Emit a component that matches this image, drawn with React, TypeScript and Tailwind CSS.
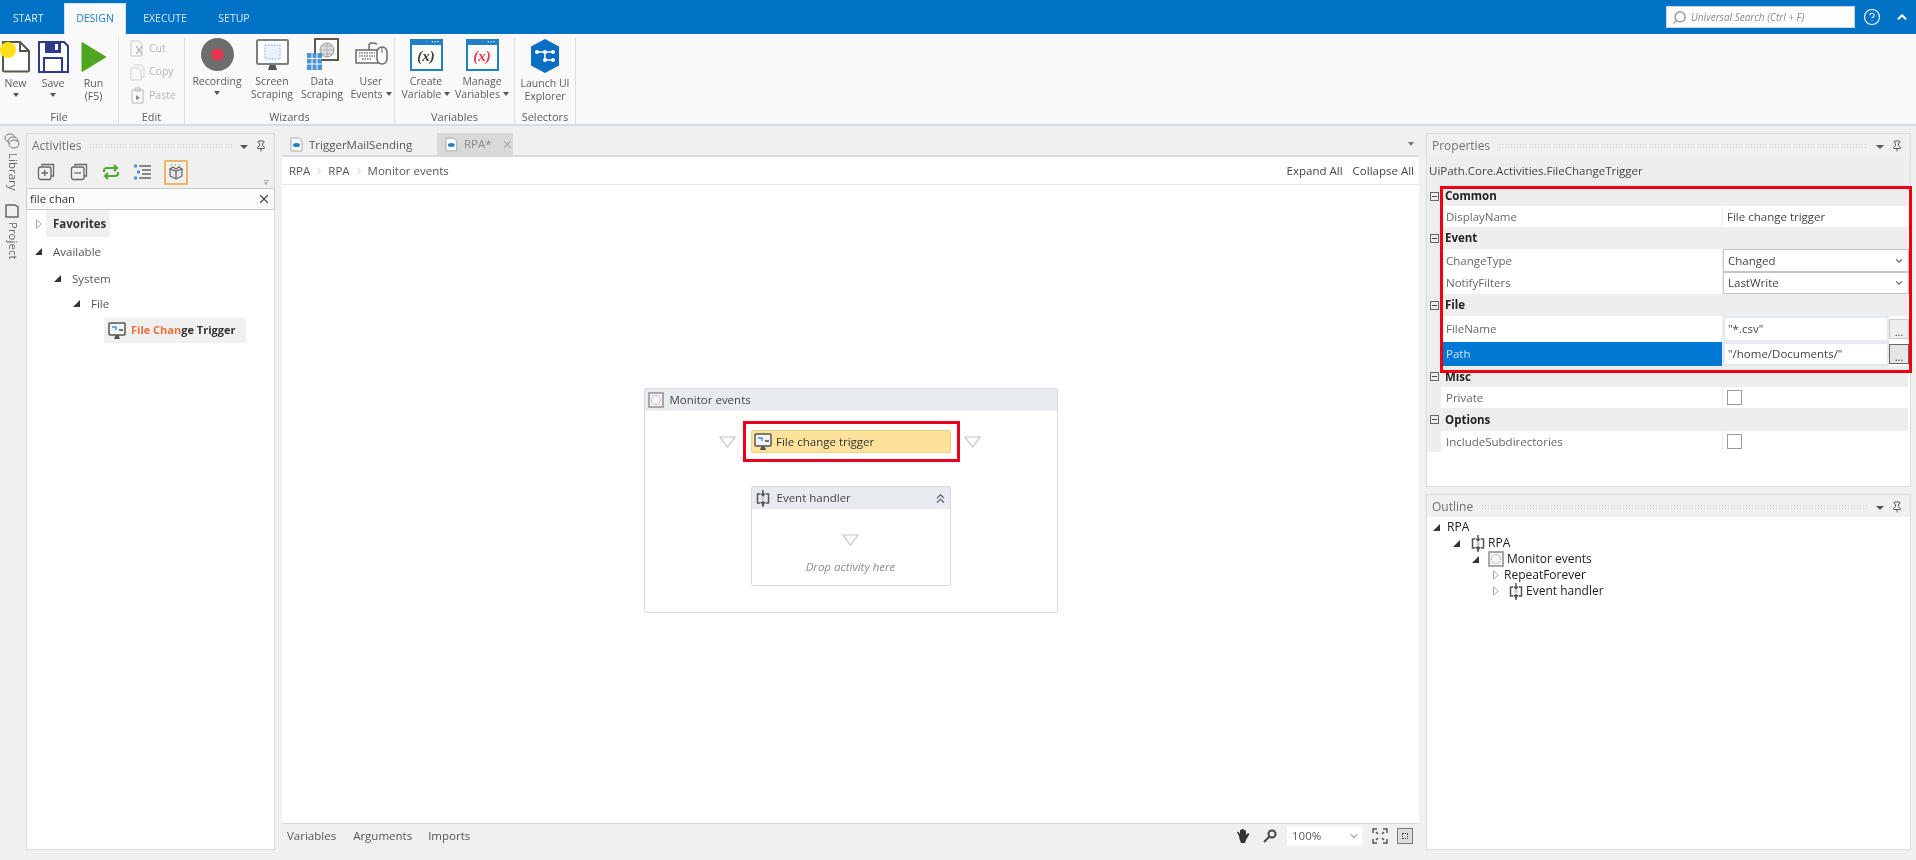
import { ChevronDown, ChevronUp, ChevronsUp, ChevronRight, CircleHelp, Pin, Search, X } from "lucide-react";
import type { ReactNode } from "react";

function Caret() {
  return <span className="inline-block w-0 h-0 border-x-[3.5px] border-x-transparent border-t-[4px] border-t-[#555]" />;
}

function Grip() {
  return <div className="flex-1 h-[6px] mx-2 bg-[radial-gradient(#c9c9c9_1px,transparent_1px)] bg-[length:3px_3px]" />;
}

function PanelTitle({ title }: { title: string }) {
  return (
    <div className="h-[22px] flex items-center pl-[5px] pr-[5px] pt-[1px] text-[12px] text-[#717171] bg-[#f0f0f0] shrink-0">
      {title}
      <Grip />
      <span className="mt-[2px] mr-[7px] w-0 h-0 border-x-[4px] border-x-transparent border-t-[4px] border-t-[#555]" />
      <Pin size={12} className="text-[#555] mr-[2px]" />
    </div>
  );
}

function RibbonButton({ width, icon, lines, caret }: { width: string; icon: ReactNode; lines: string[]; caret?: "below" | "inline" }) {
  return (
    <div className={`${width} shrink-0 flex flex-col items-center text-[10.5px] leading-[12px] text-[#5c5c5c]`}>
      <div className="h-[36px] flex items-end justify-center">{icon}</div>
      <div className="mt-[4px] text-center whitespace-nowrap">{lines[0]}</div>
      {lines[1] && (
        <div className="mt-[1px] text-center whitespace-nowrap flex items-center gap-[3px]">
          {lines[1]}
          {caret === "inline" && <Caret />}
        </div>
      )}
      {caret === "below" && (
        <div className="mt-[4px] leading-none flex">
          <Caret />
        </div>
      )}
    </div>
  );
}

function RibbonGroup({ width, label, children }: { width: string; label: string; children: ReactNode }) {
  return (
    <div className={`${width} shrink-0 h-[87px] mt-[3px] border-r border-[#dedede] flex flex-col`}>
      <div className="flex flex-1">{children}</div>
      <div className="text-center text-[11px] leading-[14px] text-[#5c5c5c]">{label}</div>
    </div>
  );
}

function NewIcon() {
  return (
    <svg width="32" height="33" viewBox="0 0 32 33" fill="none" stroke="#57564d" strokeWidth="2">
      <path d="M3 2h17l9 9v19a1.5 1.5 0 0 1-1.5 1.5H4.500A1.500 1.500 0 0 1 3 30z" fill="#fff" />
      <path d="M20 2v9h9" />
    </svg>
  );
}

function SaveIcon() {
  return (
    <svg width="32" height="32" viewBox="0 0 32 32" fill="none" stroke="#2e3a8c" strokeWidth="2">
      <path d="M2 1h25l4 4v26H2z" fill="#fff" />
      <path d="M9 1h14v10H9z" fill="#2e3a8c" />
      <path d="M18 3h3v6h-3z" fill="#fff" stroke="none" />
      <path d="M7 31V17h18v14" />
    </svg>
  );
}

function RunIcon() {
  return (
    <svg width="26" height="32" viewBox="0 0 26 32">
      <path d="M2 1.500 24 15a1 1 0 0 1 0 2L2 30.500a1 1 0 0 1-1.500-1V2.500A1 1 0 0 1 2 1.500z" fill="#4fa620" />
    </svg>
  );
}

function RecordIcon() {
  return (
    <svg width="33" height="33" viewBox="0 0 33 33">
      <circle cx="16.500" cy="16.500" r="16.500" fill="#6d6d6d" />
      <circle cx="16.500" cy="16.500" r="6" fill="#ee3350" />
    </svg>
  );
}

function ScreenIcon() {
  return (
    <svg width="33" height="32" viewBox="0 0 33 32">
      <rect x="1" y="1" width="31" height="24" rx="1.500" fill="#fff" stroke="#7e7e7e" strokeWidth="2" />
      <rect x="9" y="6" width="15" height="14" fill="#eaf3fb" stroke="#6aa9dc" strokeWidth="1" strokeDasharray="1.500 1.500" />
      <path d="M12 31l1.500-5h6l1.500 5z" fill="#555" />
    </svg>
  );
}

function DataIcon() {
  return (
    <svg width="33" height="33" viewBox="0 0 33 33">
      <rect x="9" y="1" width="23" height="21" fill="#fff" stroke="#5f5a48" strokeWidth="2" />
      <circle cx="21" cy="12" r="7" fill="#ddd" stroke="#999" />
      <path d="M14 12h14M21 5v14M16 8h10M16 16h10" stroke="#aaa" strokeWidth=".8" />
      <rect x="1" y="15" width="15" height="17" fill="#4d92d6" />
      <path d="M1 20.500h15M1 26h15M6 15v17M11 15v17" stroke="#fff" strokeWidth="1" />
    </svg>
  );
}

function EventsIcon() {
  return (
    <svg width="33" height="26" viewBox="0 0 33 26" fill="none" className="mb-[4px]">
      <path d="M1 9h22v13H1z" fill="#fff" stroke="#6a6a6a" strokeWidth="1.500" />
      <path d="M4 12h16M4 15h16M7 18h10" stroke="#777" strokeWidth="1.500" strokeDasharray="1.500 1" />
      <path d="M14 9V4c0-2 4-3 8-1" stroke="#6a6a6a" strokeWidth="1.500" />
      <rect x="22" y="6" width="10" height="17" rx="5" fill="#fff" stroke="#6a6a6a" strokeWidth="1.500" />
      <path d="M27 6v6" stroke="#6a6a6a" />
    </svg>
  );
}

function VarIcon({ color }: { color: string }) {
  return (
    <div className="relative w-[33px] h-[32px] bg-[#fbfbf8] border-2 border-[#1f7fc8] border-t-[6px]">
      <span className="absolute right-[1px] -top-[5px] text-white text-[6px] leading-[5px] tracking-[0.5px]">•••</span>
      <div className={`${color} text-center font-bold italic text-[15px] leading-[23px] font-['Liberation_Serif',serif]`}>(x)</div>
    </div>
  );
}

function ExplorerIcon() {
  return (
    <svg width="30" height="34" viewBox="0 0 30 34">
      <path d="M15 0l14 7.500v19L15 34 1 26.500v-19z" fill="#0a6fc2" strokeLinejoin="round" />
      <path d="M7 13h16M15 13v8M15 21h8" stroke="#fff" strokeWidth="1.500" />
      <circle cx="7" cy="13" r="2" fill="#fff" />
      <circle cx="23" cy="13" r="2" fill="#fff" />
      <circle cx="15" cy="13" r="2" fill="#fff" />
      <circle cx="15" cy="21" r="2" fill="#fff" />
      <circle cx="23" cy="21" r="2" fill="#fff" />
    </svg>
  );
}

function EditRow({ label, icon }: { label: string; icon: ReactNode }) {
  return (
    <div className="h-[23.500px] flex items-center pl-[11px] gap-[4px] text-[10.5px] text-[#b5b5b5]">
      <span className="w-[15px] h-[18px] flex items-center justify-center">{icon}</span>
      {label}
    </div>
  );
}

function Ribbon() {
  return (
    <div className="h-[92px] shrink-0 bg-[#f9f9f9] border-b-2 border-[#d6dce2] flex">
      <RibbonGroup width="w-[119px]" label="File">
        <RibbonButton width="w-[31px]" icon={<NewIcon />} lines={["New"]} caret="below" />
        <RibbonButton width="w-[44px]" icon={<SaveIcon />} lines={["Save"]} caret="below" />
        <RibbonButton width="w-[37px]" icon={<RunIcon />} lines={["Run", "(F5)"]} />
      </RibbonGroup>
      <RibbonGroup width="w-[66px]" label="Edit">
        <div>
          <EditRow label="Cut" icon={<svg width="15" height="17" viewBox="0 0 15 17" fill="none" stroke="#c9c9c9"><path d="M1 1h8l3 3v12H1z" /><path d="M6 6l6 8M12 6l-6 8" stroke="#999" /></svg>} />
          <EditRow label="Copy" icon={<svg width="15" height="17" viewBox="0 0 15 17" fill="none" stroke="#d0d0d0"><path d="M4 1h7l3 3v9h-3M1 4h7l3 3v9H1z" /></svg>} />
          <EditRow label="Paste" icon={<svg width="15" height="17" viewBox="0 0 15 17" fill="none" stroke="#bbb"><path d="M2 3h11v13H2zM5 1h5v3H5z" /><path d="M6 8l4 3-4 2z" fill="#888" stroke="none" /></svg>} />
        </div>
      </RibbonGroup>
      <RibbonGroup width="w-[210px]" label="Wizards">
        <div className="flex -mt-[2px]">
          <RibbonButton width="w-[64px]" icon={<RecordIcon />} lines={["Recording"]} caret="below" />
          <RibbonButton width="w-[46px]" icon={<ScreenIcon />} lines={["Screen", "Scraping"]} />
          <RibbonButton width="w-[54px]" icon={<DataIcon />} lines={["Data", "Scraping"]} />
          <RibbonButton width="w-[44px]" icon={<EventsIcon />} lines={["User", "Events"]} caret="inline" />
        </div>
      </RibbonGroup>
      <RibbonGroup width="w-[120px]" label="Variables">
        <div className="flex -mt-[2px] pl-[2px]">
          <RibbonButton width="w-[58px]" icon={<VarIcon color="text-[#3f3f36]" />} lines={["Create", "Variable"]} caret="inline" />
          <RibbonButton width="w-[54px]" icon={<VarIcon color="text-[#ee3350]" />} lines={["Manage", "Variables"]} caret="inline" />
        </div>
      </RibbonGroup>
      <RibbonGroup width="w-[61px]" label="Selectors">
        <RibbonButton width="w-[60px]" icon={<ExplorerIcon />} lines={["Launch UI", "Explorer"]} />
      </RibbonGroup>
    </div>
  );
}

function TopBar() {
  return (
    <div className="h-[34px] shrink-0 bg-[#0072c6] flex items-end text-[10.5px] text-[#d9ecf9]">
      <div className="w-[64px] h-[31px] flex items-center pl-[13px]">START</div>
      <div className="w-[62px] h-[31px] flex items-center justify-center bg-[#f9f9f9] text-[#1a7cc8] border-t border-x border-[#cfe3f2]">DESIGN</div>
      <div className="w-[78px] h-[31px] flex items-center justify-center">EXECUTE</div>
      <div className="w-[60px] h-[31px] flex items-center justify-center">SETUP</div>
      <div className="ml-auto self-center flex items-center mr-[7px]">
        <div className="w-[189px] h-[22px] bg-white border border-[#cfd6dc] flex items-center pl-[5px] gap-[4px] text-[10px] italic text-[#8a8a8a]">
          <Search size={15} className="text-[#8a8a8a] -scale-x-100" />
          Universal Search (Ctrl + F)
        </div>
        <CircleHelp size={18} strokeWidth={1.500} className="ml-[8px] text-white" />
        <ChevronUp size={14} strokeWidth={3.500} className="ml-[14px] text-white" />
      </div>
    </div>
  );
}

function SideRail() {
  return (
    <div className="w-[26px] shrink-0 flex flex-col items-center text-[11.500px] text-[#666]">
      <svg width="16" height="16" viewBox="0 0 16 16" fill="none" stroke="#777" className="ml-[-2px]">
        <ellipse cx="6" cy="5" rx="5" ry="4" fill="#f0f0f0" />
        <ellipse cx="9" cy="8" rx="5" ry="4" fill="#f0f0f0" />
        <ellipse cx="10" cy="11" rx="5" ry="4" fill="#f0f0f0" />
      </svg>
      <div className="[writing-mode:vertical-rl] mt-[4px] h-[37px] leading-[16px]">Library</div>
      <svg width="14" height="15" viewBox="0 0 14 15" fill="none" stroke="#666" strokeWidth="1.500" className="mt-[13px] ml-[-2px]">
        <path d="M1 2h9l3 2v10H1z" />
      </svg>
      <div className="[writing-mode:vertical-rl] mt-[4px] leading-[16px]">Project</div>
    </div>
  );
}

function TreeArrow({ open }: { open?: boolean }) {
  return open ? (
    <span className="w-0 h-0 border-l-[7px] border-l-transparent border-b-[7px] border-b-[#333]" />
  ) : (
    <svg width="6" height="10" viewBox="0 0 6 10" fill="#fff" stroke="#aaa">
      <path d="M.5.8 5.300 5 .5 9.200z" />
    </svg>
  );
}

function MonitorIcon({ size = 18 }: { size?: number }) {
  return (
    <svg width={size} height={size} viewBox="0 0 18 18" fill="none">
      <rect x="1" y="1" width="16" height="12" rx="1" fill="#f3f3f3" stroke="#555" strokeWidth="1.500" />
      <path d="M4 5h4v3" stroke="#4d92d6" strokeWidth="1.500" />
      <path d="M11 8h4" stroke="#444" strokeWidth="1.500" />
      <path d="M6 17l1.500-4h3L12 17z" fill="#555" />
    </svg>
  );
}

function SeqIcon() {
  return (
    <svg width="14" height="17" viewBox="0 0 14 17" fill="none" stroke="#555" strokeWidth="1.500">
      <path d="M4 4H1.500v9H4M10 4h2.500v9H10" />
      <path d="M7 0v5M7 11v6" />
      <path d="M4 3.500h6L7 7zM4 12h6l-3 4z" fill="#555" stroke="none" />
      <rect x="5.500" y="6.500" width="3" height="4" fill="#ccc" stroke="none" />
    </svg>
  );
}

function ClockIcon({ size }: { size: string }) {
  return (
    <div className={`${size} border-2 border-[#a8a8a8] bg-[#f4f4f4] flex items-center justify-center shrink-0`}>
      <div className="w-[10px] h-[10px] rounded-full border border-dotted border-[#999]" />
    </div>
  );
}

function ActivitiesPanel() {
  return (
    <div className="w-[249px] shrink-0 flex flex-col border border-[#dcdcdc] bg-white">
      <PanelTitle title="Activities" />
      <div className="h-[32px] shrink-0 bg-[#f0f0f0] flex items-center pl-[10px] relative">
        <svg width="18" height="18" viewBox="0 0 18 18" fill="none" stroke="#666" strokeWidth="1.300" className="mr-[15px]">
          <path d="M5 3V1.500h11.500V13H14" />
          <rect x="1.500" y="4" width="12.500" height="12.500" rx="2" />
          <path d="M4.500 10h6.500M7.750 7v6" />
        </svg>
        <svg width="18" height="18" viewBox="0 0 18 18" fill="none" stroke="#666" strokeWidth="1.300" className="mr-[14px]">
          <path d="M5 3V1.500h11.500V13H14" />
          <rect x="1.500" y="4" width="12.500" height="12.500" rx="2" />
          <path d="M4.500 10h6.500" />
        </svg>
        <svg width="18" height="18" viewBox="0 0 18 18" fill="none" stroke="#55aa33" strokeWidth="2.200" className="mr-[14px]">
          <path d="M2 9V7.500A2.500 2.500 0 0 1 4.500 5H14M16 9v1.500a2.500 2.500 0 0 1-2.500 2.500H4" />
          <path d="M12 2l3 3-3 3M6 10l-3 3 3 3" />
        </svg>
        <svg width="18" height="18" viewBox="0 0 18 18" fill="none" className="mr-[12px]">
          <path d="M5 3h12M8 7h9M8 11h9M5 15h12" stroke="#666" strokeWidth="1.300" />
          <path d="M0 1.500h3v3H0zM3 7.500h3v3H3zM0 13.500h3v3H0z" fill="#4d92d6" />
        </svg>
        <div className="w-[24px] h-[25px] border-2 border-[#efb566] flex items-center justify-center">
          <svg width="16" height="16" viewBox="0 0 16 16" fill="none" stroke="#666" strokeWidth="1.200">
            <path d="M2 5l6 2 6-2v7l-6 3-6-3zM8 7v8" fill="#e7e7e7" />
            <path d="M2 5l3-2 3 2 3-2 3 2" />
            <path d="M3 1h1M7 .8h1M11 1h1" stroke="#66bb44" strokeWidth="1.500" />
          </svg>
        </div>
        <div className="absolute right-[5px] bottom-[3px] flex flex-col gap-[1px]">
          <div className="w-[5px] h-[1px] bg-[#aaa]" />
          <span className="w-0 h-0 border-x-[2.500px] border-x-transparent border-t-[3px] border-t-[#aaa]" />
        </div>
      </div>
      <div className="h-[22px] shrink-0 flex items-center justify-between pl-[3px] pr-[3px] border border-[#c8c8c8] bg-[#fbfbfb] text-[11.500px] text-[#333] -mx-[1px]">
        file chan
        <X size={14} strokeWidth={2} className="text-[#444]" />
      </div>
      <div className="flex-1 text-[11.500px] text-[#555]">
        <div className="h-[27px] flex items-center pl-[9px]">
          <TreeArrow />
          <span className="ml-[4px] h-[27px] w-[64px] bg-[#f0f0f0] flex items-center pl-[7px] font-bold text-[#333]">Favorites</span>
        </div>
        <div className="h-[29px] flex items-center pl-[8px]">
          <TreeArrow open />
          <span className="ml-[11px]">Available</span>
        </div>
        <div className="h-[25px] flex items-center pl-[27px]">
          <TreeArrow open />
          <span className="ml-[11px]">System</span>
        </div>
        <div className="h-[25px] flex items-center pl-[46px]">
          <TreeArrow open />
          <span className="ml-[11px]">File</span>
        </div>
        <div className="mt-[2px] ml-[77px] w-[142px] h-[25px] bg-[#f0f0f0] flex items-center pl-[4px] gap-[5px] font-bold text-[11px] whitespace-nowrap text-[#333]">
          <MonitorIcon />
          <span>
            <span className="text-[#f0703a]">File Chan</span>ge Trigger
          </span>
        </div>
      </div>
    </div>
  );
}

function DropArrow({ className }: { className?: string }) {
  return (
    <svg width="17" height="12" viewBox="0 0 17 12" className={className} fill="#fff" stroke="#bcc5d3" strokeWidth="1.200">
      <path d="M1 1h15l-7.500 10z" />
    </svg>
  );
}

function Diagram() {
  return (
    <div className="flex-1 flex items-center justify-center pb-[7px]">
      <div className="w-[414px] h-[225px] border border-[#d3d9e2] rounded-[2px] bg-white flex flex-col items-center">
        <div className="w-full h-[22px] bg-[#e8ebef] flex items-center pl-[3px] gap-[6px] text-[11.500px] text-[#444]">
          <ClockIcon size="w-[16px] h-[16px]" />
          Monitor events
        </div>
        <div className="mt-[10px] flex items-center gap-[4px] -ml-[2px]">
          <DropArrow className="mr-[3px]" />
          <div className="w-[217px] h-[41px] border-[3px] border-[#e8001c] flex items-center justify-center">
            <div className="w-[200px] h-[23px] bg-[#fde29c] border border-[#f0cf80] rounded-[2px] flex items-center pl-[2px] gap-[4px] text-[11.500px] text-[#333]">
              <MonitorIcon />
              File change trigger
            </div>
          </div>
          <DropArrow />
        </div>
        <div className="mt-[24px] w-[200px] h-[100px] border border-[#d3d9e2] rounded-[2px] flex flex-col items-center">
          <div className="w-full h-[22px] bg-[#e8ebef] flex items-center pl-[4px] gap-[7px] text-[11.500px] text-[#444]">
            <SeqIcon />
            Event handler
            <ChevronsUp size={15} strokeWidth={2} className="ml-auto mr-[2px] text-[#5a6472]" />
          </div>
          <DropArrow className="mt-[25px]" />
          <div className="mt-[12px] text-[11.500px] italic text-[#8c8c8c]">Drop activity here</div>
        </div>
      </div>
    </div>
  );
}

function DocIcon() {
  return (
    <svg width="13" height="15" viewBox="0 0 13 15" fill="#fff" stroke="#aaa">
      <path d="M1 1h8l3 3v10H1z" />
      <ellipse cx="6.500" cy="8" rx="3.500" ry="2" fill="#1f7fc8" stroke="none" />
    </svg>
  );
}

function CenterPanel() {
  return (
    <div className="w-[1137px] shrink-0 flex flex-col mx-[7px]">
      <div className="h-[22px] shrink-0 flex items-center pl-[8px] text-[11.500px] text-[#555]">
        <DocIcon />
        <span className="ml-[6px] mt-[1px]">TriggerMailSending</span>
        <div className="ml-[25px] w-[76px] h-[22px] bg-[#d9d9d9] flex items-center pl-[8px] text-[#8a8a8a]">
          <DocIcon />
          <span className="ml-[6px]">RPA*</span>
          <X size={13} strokeWidth={1.800} className="ml-[9px]" />
        </div>
        <span className="ml-auto mr-[5px] w-0 h-0 border-x-[3.500px] border-x-transparent border-t-[4px] border-t-[#777]" />
      </div>
      <div className="flex-1 flex flex-col bg-white border-t-2 border-[#d9d9d9] min-h-0">
        <div className="h-[28px] shrink-0 border-b border-[#dfe6ef] flex items-center pl-[7px] pr-[5px] text-[11.500px] text-[#555]">
          RPA
          <ChevronRight size={12} className="mx-[3px] text-[#ccc]" />
          RPA
          <ChevronRight size={12} className="mx-[3px] text-[#ccc]" />
          Monitor events
          <span className="ml-auto text-[#444]">Expand All</span>
          <span className="ml-[10px] text-[#444]">Collapse All</span>
        </div>
        <Diagram />
      </div>
      <div className="h-[24px] shrink-0 bg-[#f0f0f0] border-t border-[#d9d9d9] flex items-center pl-[5px] pr-[6px] text-[11.500px] text-[#555] mb-[3px]">
        <span>Variables</span>
        <span className="ml-[17px]">Arguments</span>
        <span className="ml-[16px]">Imports</span>
        <svg width="15" height="16" viewBox="0 0 15 16" className="ml-auto" fill="#333">
          <path d="M3 8L1 4.500l1-1L4 6V2h1.500v3.500V1H7v4.500V1.500h1.500V6V2.500H10V7l2-2 1.500 1L10 12l-1 3H5L3.500 11z" />
        </svg>
        <svg width="14" height="14" viewBox="0 0 14 14" className="ml-[12px]" fill="none" stroke="#444" strokeWidth="2">
          <circle cx="9" cy="5" r="3.500" />
          <path d="M6 8l-5 5" />
        </svg>
        <div className="ml-[10px] w-[75px] h-[20px] bg-white flex items-center pl-[5px] text-[#555]">
          100%
          <ChevronDown size={12} className="ml-auto mr-[2px] text-[#666]" />
        </div>
        <svg width="16" height="16" viewBox="0 0 16 16" className="ml-[10px]" fill="none" stroke="#555" strokeWidth="1.500">
          <path d="M1 5V1h4M11 1h4v4M15 11v4h-4M5 15H1v-4M4 4l2 2M12 4l-2 2M4 12l2-2M12 12l-2-2" />
        </svg>
        <div className="ml-[9px] w-[16px] h-[16px] border border-[#777] bg-[#ddd] flex items-center justify-center">
          <div className="w-[6px] h-[6px] border border-dotted border-[#444]" />
        </div>
      </div>
    </div>
  );
}

function SectionRow({ title, height }: { title: string; height: string }) {
  return (
    <div className={`${height} flex items-center bg-[#eeeeee]`}>
      <div className="w-[14px] flex justify-center">
        <div className="w-[9px] h-[9px] border border-[#666] flex items-center justify-center">
          <div className="w-[5px] h-[1px] bg-[#444]" />
        </div>
      </div>
      <div className="pl-[4px] text-[11.500px] font-bold text-[#222]">{title}</div>
    </div>
  );
}

function PropRow({ label, height, selected, children }: { label: string; height: string; selected?: boolean; children: ReactNode }) {
  return (
    <div className={`${height} flex bg-[#eeeeee] text-[11.500px]`}>
      <div className="w-[14px] shrink-0" />
      <div className={`w-[281px] shrink-0 flex items-center pl-[5px] mr-[1px] ${selected ? "bg-[#0078d4] text-[#cfe6f8]" : "bg-white text-[#666]"}`}>{label}</div>
      <div className="flex-1 bg-white flex items-center text-[#444]">{children}</div>
    </div>
  );
}

function SelectBox({ value }: { value: string }) {
  return (
    <div className="w-[186px] h-full border border-[#c4c4c4] flex items-center pl-[4px] pr-[4px] justify-between">
      {value}
      <ChevronDown size={10} strokeWidth={3} className="text-[#777]" />
    </div>
  );
}

function PathBox({ value, active }: { value: string; active?: boolean }) {
  return (
    <div className="w-full h-full flex items-center">
      <div className="w-[166px] h-full border-2 border-[#e4e9ef] flex items-center pl-[3px]">{value}</div>
      <div className={`w-[20px] h-[20px] flex items-end justify-center text-[11px] leading-[12px] ${active ? "bg-[#e6e6e6] border border-[#666]" : "bg-[#eeeeee] border border-[#ccc]"}`}>...</div>
    </div>
  );
}

function CheckBox() {
  return <div className="ml-[4px] w-[15px] h-[15px] border border-[#9a9a9a] bg-white" />;
}

function PropertiesPanel() {
  return (
    <div className="h-[354px] shrink-0 flex flex-col border border-[#dcdcdc] bg-white">
      <PanelTitle title="Properties" />
      <div className="h-[30px] shrink-0 bg-[#eeeeee] flex items-center pl-[2px] text-[11.500px] text-[#444]">UiPath.Core.Activities.FileChangeTrigger</div>
      <div className="relative flex-1 pr-[2px]">
        <SectionRow title="Common" height="h-[20px]" />
        <PropRow label="DisplayName" height="h-[21px]">
          <span className="pl-[4px]">File change trigger</span>
        </PropRow>
        <SectionRow title="Event" height="h-[22px]" />
        <PropRow label="ChangeType" height="h-[23px]">
          <SelectBox value="Changed" />
        </PropRow>
        <PropRow label="NotifyFilters" height="h-[22px]">
          <SelectBox value="LastWrite" />
        </PropRow>
        <SectionRow title="File" height="h-[22px]" />
        <PropRow label="FileName" height="h-[26px]">
          <PathBox value={'"*.csv"'} />
        </PropRow>
        <PropRow label="Path" height="h-[24px]" selected>
          <PathBox value={'"/home/Documents/"'} active />
        </PropRow>
        <SectionRow title="Misc" height="h-[21px]" />
        <PropRow label="Private" height="h-[21px]">
          <CheckBox />
        </PropRow>
        <SectionRow title="Options" height="h-[23px]" />
        <PropRow label="IncludeSubdirectories" height="h-[21px]">
          <CheckBox />
        </PropRow>
        <div className="absolute left-[13px] -right-[2px] top-0 h-[187px] border-[3px] border-[#f0000f] pointer-events-none" />
      </div>
    </div>
  );
}

function OutlineRow({ indent, gap, open, icon, label }: { indent: string; gap: string; open: boolean; icon?: ReactNode; label: string }) {
  return (
    <div className={`h-[16px] flex items-center ${indent}`}>
      <TreeArrow open={open} />
      <span className={`${gap} flex items-center gap-[3px]`}>
        {icon}
        {label}
      </span>
    </div>
  );
}

function OutlinePanel() {
  return (
    <div className="mt-[7px] flex-1 flex flex-col border border-[#dcdcdc] bg-white">
      <PanelTitle title="Outline" />
      <div className="pt-[2px] text-[12px] text-[#222]">
        <OutlineRow indent="pl-[6px]" gap="ml-[7px]" open label="RPA" />
        <OutlineRow indent="pl-[26px]" gap="ml-[11px]" open icon={<SeqIcon />} label="RPA" />
        <OutlineRow indent="pl-[45px]" gap="ml-[9px]" open icon={<ClockIcon size="w-[16px] h-[16px]" />} label="Monitor events" />
        <OutlineRow indent="pl-[66px]" gap="ml-[5px]" open={false} label="RepeatForever" />
        <OutlineRow indent="pl-[66px]" gap="ml-[10px]" open={false} icon={<SeqIcon />} label="Event handler" />
      </div>
    </div>
  );
}

export default function App() {
  return (
    <div className="relative w-[1916px] h-[860px] overflow-hidden flex flex-col bg-[#f0f0f0] font-['Open_Sans',sans-serif] blur-[0.4px]">
      <TopBar />
      <Ribbon />
      <div className="flex flex-1 min-h-0 pt-[7px] pb-[10px]">
        <SideRail />
        <ActivitiesPanel />
        <CenterPanel />
        <div className="w-[485px] shrink-0 flex flex-col">
          <PropertiesPanel />
          <OutlinePanel />
        </div>
      </div>
      <div className="absolute left-0 top-[42px] w-[16px] h-[16px] rounded-full bg-[#fde01a]" />
    </div>
  );
}
